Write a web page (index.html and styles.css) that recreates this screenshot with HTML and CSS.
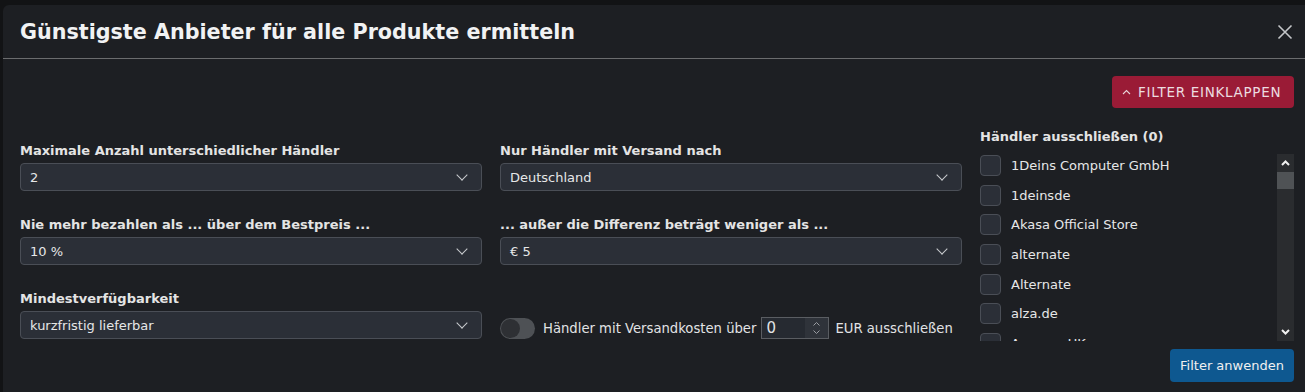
FILE: index.html
```html
<!DOCTYPE html>
<html lang="de">
<head>
    <meta charset="UTF-8">
    <title>Günstigste Anbieter ermitteln</title>
    <link rel="stylesheet" href="styles.css">
</head>
<body>
    <div class="modal">
        <div class="modal-header">
            <h2 class="modal-title">Günstigste Anbieter für alle Produkte ermitteln</h2>
            <button class="btn-close" aria-label="Schließen">
                <svg width="16" height="16" viewBox="0 0 16 16"><path d="M1.5 1.5 L14.5 14.5 M14.5 1.5 L1.5 14.5" stroke="#c4c6c9" stroke-width="1.6" fill="none"/></svg>
            </button>
        </div>

        <div class="modal-body">
            <div class="toolbar">
                <button class="btn btn-red">
                    <svg width="9" height="6" viewBox="0 0 9 6"><path d="M1 5 L4.5 1.5 L8 5" stroke="#e8d4d8" stroke-width="1.1" fill="none"/></svg>
                    Filter einklappen
                </button>
            </div>

            <div class="filters">
                <!-- linke Spalte -->
                <div class="col col-form">
                    <div class="group">
                        <label class="label">Maximale Anzahl unterschiedlicher Händler</label>
                        <div class="select">2<span class="chev"></span></div>
                    </div>
                    <div class="group">
                        <label class="label">Nie mehr bezahlen als ... über dem Bestpreis ...</label>
                        <div class="select">10 %<span class="chev"></span></div>
                    </div>
                    <div class="group">
                        <label class="label">Mindestverfügbarkeit</label>
                        <div class="select">kurzfristig lieferbar<span class="chev"></span></div>
                    </div>
                </div>

                <!-- mittlere Spalte -->
                <div class="col col-form">
                    <div class="group">
                        <label class="label">Nur Händler mit Versand nach</label>
                        <div class="select">Deutschland<span class="chev"></span></div>
                    </div>
                    <div class="group">
                        <label class="label">... außer die Differenz beträgt weniger als ...</label>
                        <div class="select">€ 5<span class="chev"></span></div>
                    </div>
                    <div class="group group-switch">
                        <span class="switch"><span class="knob"></span></span>
                        <span class="switch-text">Händler mit Versandkosten über</span>
                        <span class="number">0<span class="spin"><svg width="9" height="16" viewBox="0 0 9 16"><path d="M1.5 5.5 L4.5 2.5 L7.5 5.5 M1.5 10.5 L4.5 13.5 L7.5 10.5" stroke="#9a9da2" stroke-width="1" fill="none"/></svg></span></span>
                        <span class="switch-text eur">EUR ausschließen</span>
                    </div>
                </div>

                <!-- rechte Spalte -->
                <div class="col col-list">
                    <div class="label">Händler ausschließen (0)</div>
                    <div class="list-wrap">
                        <div class="list">
                            <div class="item"><span class="check"></span>1Deins Computer GmbH</div>
                            <div class="item"><span class="check"></span>1deinsde</div>
                            <div class="item"><span class="check"></span>Akasa Official Store</div>
                            <div class="item"><span class="check"></span>alternate</div>
                            <div class="item"><span class="check"></span>Alternate</div>
                            <div class="item"><span class="check"></span>alza.de</div>
                            <div class="item"><span class="check"></span>Amazon UK</div>
                        </div>
                        <div class="scrollbar">
                            <span class="arrow"><svg width="9" height="6" viewBox="0 0 9 6"><path d="M1 5 L4.5 1.5 L8 5" stroke="#f0f0f0" stroke-width="2" fill="none"/></svg></span>
                            <span class="thumb"></span>
                            <span class="track"></span>
                            <span class="arrow"><svg width="9" height="6" viewBox="0 0 9 6"><path d="M1 1 L4.5 4.5 L8 1" stroke="#f0f0f0" stroke-width="2" fill="none"/></svg></span>
                        </div>
                    </div>
                    <div class="apply">
                        <button class="btn btn-blue">Filter anwenden</button>
                    </div>
                </div>
            </div>
        </div>
    </div>
</body>
</html>
```

FILE: styles.css
```css
html, body {
    margin: 0;
    height: 100%;
    overflow: hidden;
}

body {
    background: #121315;
    padding: 5px 0 0 3px;
    font-family: 'DejaVu Sans', Verdana, sans-serif;
    color: #e2e3e5;
    font-size: 13px;
}

.modal {
    width: 1308px;
    height: 400px;
    background: #1d1f23;
    border-radius: 6px 0 0 0;
}

.modal-header {
    height: 53px;
    display: flex;
    align-items: center;
    justify-content: space-between;
    padding: 0 13px 0 17px;
    border-bottom: 1px solid #6b6c6e;
}

.modal-title {
    margin: 0;
    font-size: 20.7px;
    font-weight: bold;
    color: #f1f2f3;
}

.btn-close {
    background: none;
    border: none;
    padding: 0;
    width: 16px;
    height: 16px;
    margin-right: 5px;
}

.modal-body {
    padding: 17px 17px 0 17px;
}

.toolbar {
    display: flex;
    justify-content: flex-end;
}

.btn {
    border: none;
    border-radius: 4px;
    font-family: inherit;
    color: #f0f0f0;
    cursor: pointer;
}

.btn-red {
    background: #9a1b36;
    height: 32px;
    width: 182px;
    font-size: 13.5px;
    text-transform: uppercase;
    letter-spacing: 0.7px;
    display: flex;
    align-items: center;
    gap: 7px;
    padding: 0 0 0 10px;
    color: #ecdde0;
    white-space: nowrap;
}

.btn-blue {
    background: #0e5890;
    height: 33px;
    width: 124px;
    font-size: 13px;
}

.filters {
    display: grid;
    grid-template-columns: 462px 462px 314px;
    gap: 18px;
    margin-top: 18px;
}

.col-form {
    padding-top: 16px;
}

.group {
    margin-bottom: 25px;
}

.label {
    display: block;
    font-weight: bold;
    font-size: 13px;
    line-height: 18px;
    margin-bottom: 3px;
    color: #e4e4e4;
}

.select {
    height: 28px;
    box-sizing: border-box;
    background: #2b2f37;
    border: 1px solid #4a4e56;
    border-radius: 4px;
    padding: 0 9px;
    display: flex;
    align-items: center;
    justify-content: space-between;
    color: #e6e7e8;
}

.chev {
    width: 7px;
    height: 7px;
    border-right: 1.3px solid #c9cbce;
    border-bottom: 1.3px solid #c9cbce;
    transform: rotate(45deg);
    margin: -4px 6px 0 0;
}

.group-switch {
    display: flex;
    align-items: center;
    height: 22px;
    margin-top: 52px;
}

.switch {
    width: 35px;
    height: 21px;
    border-radius: 11px;
    background: #4e5155;
    display: flex;
    align-items: center;
    padding-left: 1px;
    box-sizing: border-box;
}

.knob {
    width: 19px;
    height: 19px;
    border-radius: 50%;
    background: #2e3034;
}

.switch-text {
    margin-left: 8px;
    font-size: 13.2px;
}

.switch-text.eur {
    margin-left: 6px;
}

.number {
    margin-left: 5px;
    width: 68px;
    height: 22px;
    box-sizing: border-box;
    border: 1px solid #5a5d62;
    background: #262a31;
    display: flex;
    align-items: center;
    justify-content: space-between;
    padding-left: 4px;
    font-size: 15px;
}

.spin {
    width: 23px;
    height: 20px;
    background: #2f333a;
    display: flex;
    align-items: center;
    justify-content: center;
}

.col-list {
    padding-top: 2px;
}

.col-list .label {
    margin-bottom: 8px;
}

.list-wrap {
    display: flex;
    height: 187px;
}

.list {
    flex: 1;
    overflow: hidden;
    display: flex;
    flex-direction: column;
    gap: 8.67px;
    padding-top: 1px;
}

.item {
    display: flex;
    align-items: center;
    height: 21px;
    flex-shrink: 0;
    font-size: 13px;
    color: #e6e7e8;
}

.check {
    width: 19px;
    height: 19px;
    border: 1px solid #4a4e56;
    background: #2b2f37;
    border-radius: 4px;
    margin-right: 10px;
    flex-shrink: 0;
}

.scrollbar {
    width: 17px;
    display: flex;
    flex-direction: column;
    background: #2a2c2f;
}

.arrow {
    height: 18px;
    display: flex;
    align-items: center;
    justify-content: center;
}

.thumb {
    height: 17px;
    background: #4f5255;
}

.track {
    flex: 1;
}

.apply {
    display: flex;
    justify-content: flex-end;
    margin-top: 8px;
}
```
